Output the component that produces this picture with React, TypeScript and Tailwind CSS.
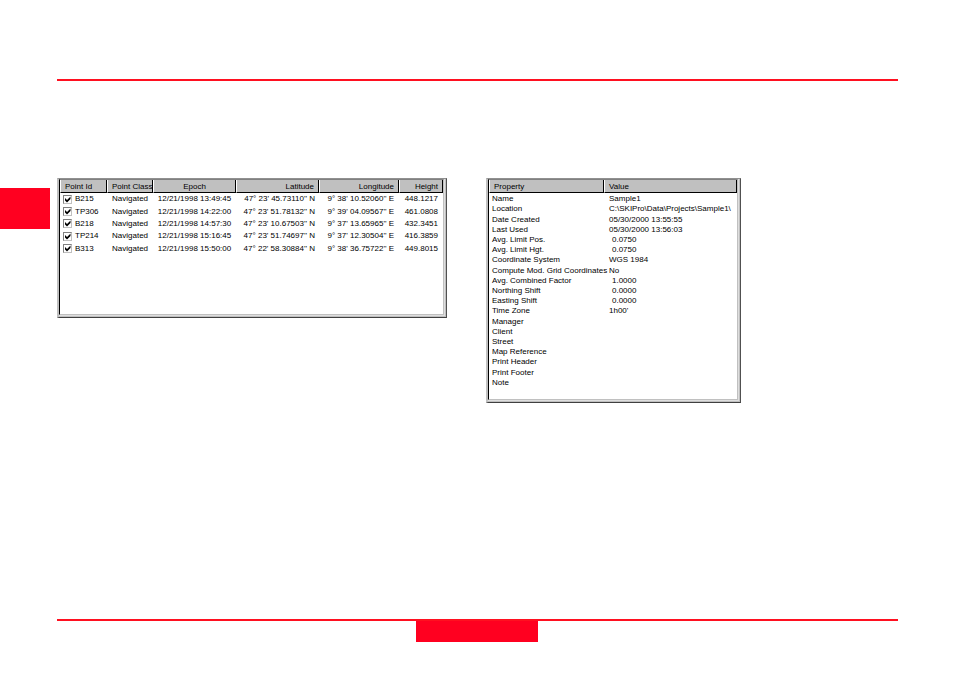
import type { ReactNode } from "react";
import clsx from "clsx";

type Point = {
  id: string;
  pointClass: string;
  epoch: string;
  latitude: string;
  longitude: string;
  height: string;
};

const points: Point[] = [
  { id: "B215", pointClass: "Navigated", epoch: "12/21/1998 13:49:45", latitude: "47° 23' 45.73110'' N", longitude: "9° 38' 10.52060'' E", height: "448.1217" },
  { id: "TP306", pointClass: "Navigated", epoch: "12/21/1998 14:22:00", latitude: "47° 23' 51.78132'' N", longitude: "9° 39' 04.09567'' E", height: "461.0808" },
  { id: "B218", pointClass: "Navigated", epoch: "12/21/1998 14:57:30", latitude: "47° 23' 10.67503'' N", longitude: "9° 37' 13.65965'' E", height: "432.3451" },
  { id: "TP214", pointClass: "Navigated", epoch: "12/21/1998 15:16:45", latitude: "47° 23' 51.74697'' N", longitude: "9° 37' 12.30504'' E", height: "416.3859" },
  { id: "B313", pointClass: "Navigated", epoch: "12/21/1998 15:50:00", latitude: "47° 22' 58.30884'' N", longitude: "9° 38' 36.75722'' E", height: "449.8015" },
];

const properties: { name: string; value: string; numeric?: boolean }[] = [
  { name: "Name", value: "Sample1" },
  { name: "Location", value: "C:\\SKIPro\\Data\\Projects\\Sample1\\" },
  { name: "Date Created", value: "05/30/2000 13:55:55" },
  { name: "Last Used", value: "05/30/2000 13:56:03" },
  { name: "Avg. Limit Pos.", value: "0.0750", numeric: true },
  { name: "Avg. Limit Hgt.", value: "0.0750", numeric: true },
  { name: "Coordinate System", value: "WGS 1984" },
  { name: "Compute Mod. Grid Coordinates", value: "No" },
  { name: "Avg. Combined Factor", value: "1.0000", numeric: true },
  { name: "Northing Shift", value: "0.0000", numeric: true },
  { name: "Easting Shift", value: "0.0000", numeric: true },
  { name: "Time Zone", value: "1h00'" },
  { name: "Manager", value: "" },
  { name: "Client", value: "" },
  { name: "Street", value: "" },
  { name: "Map Reference", value: "" },
  { name: "Print Header", value: "" },
  { name: "Print Footer", value: "" },
  { name: "Note", value: "" },
];

// sunken window edge: three nested bevels
function ListFrame({ children, className }: { children: ReactNode; className?: string }) {
  return (
    <section
      className={clsx(
        "border-t border-r border-b border-l-2 border-t-[#909090] border-r-[#505050] border-b-[#404040] border-l-[#c0c0c0]",
        className
      )}
    >
      <div className="h-full border-r border-b border-[#c0c0c0] bg-[#dedede] pr-px pb-px">
        <div className="h-full border border-t-[#808080] border-r-[#c0c0c0] border-b-[#c0c0c0] border-l-black bg-white">
          {children}
        </div>
      </div>
    </section>
  );
}

function HeadCell({ children, className }: { children?: ReactNode; className?: string }) {
  return (
    <th
      scope="col"
      className={clsx(
        "h-[13px] border-r border-b border-l border-r-black border-b-black border-l-white bg-[#c0c0c0] px-1 pt-0.5 pb-0 font-normal leading-[10px]",
        className
      )}
    >
      {children}
    </th>
  );
}

function PointList() {
  return (
    <ListFrame className="h-[140px] w-[390px]">
      <table className="h-[75px] w-full table-fixed border-separate border-spacing-0">
        <colgroup>
          <col className="w-[47px]" />
          <col className="w-[46px]" />
          <col className="w-[83px]" />
          <col className="w-[83px]" />
          <col className="w-[80px]" />
          <col />
        </colgroup>
        <thead>
          <tr>
            <HeadCell className="text-left">Point Id</HeadCell>
            <HeadCell className="text-left">Point Class</HeadCell>
            <HeadCell className="text-center">Epoch</HeadCell>
            <HeadCell className="text-right">Latitude</HeadCell>
            <HeadCell className="text-right">Longitude</HeadCell>
            <HeadCell className="text-right">Height</HeadCell>
          </tr>
        </thead>
        <tbody>
          {points.map((p) => (
            <tr key={p.id}>
              <td className="p-0 pl-[3px]">
                <label className="flex items-center gap-[3px]">
                  <span className="relative flex size-[9px]">
                    <input
                      type="checkbox"
                      defaultChecked
                      className="peer size-[9px] appearance-none border border-[#c0c0c0] border-t-[#808080] border-l-[#808080] bg-white"
                    />
                    <svg
                      viewBox="0 0 9 9"
                      className="pointer-events-none absolute inset-0 hidden size-[9px] peer-checked:block"
                      aria-hidden
                    >
                      <path d="M2 3v2.5L4 7.5l3.5-3.5V1.5L4 5z" fill="#000" />
                    </svg>
                  </span>
                  {p.id}
                </label>
              </td>
              <td className="p-0 pl-[5px]">{p.pointClass}</td>
              <td className="p-0 text-center">{p.epoch}</td>
              <td className="p-0 pr-1 text-right">{p.latitude}</td>
              <td className="p-0 pr-[5px] text-right">{p.longitude}</td>
              <td className="p-0 pr-[5px] text-right">{p.height}</td>
            </tr>
          ))}
        </tbody>
      </table>
    </ListFrame>
  );
}

function PropertyList() {
  return (
    <ListFrame className="h-[225px] w-[255px]">
      <table className="h-[207px] w-full table-fixed border-separate border-spacing-0">
        <colgroup>
          <col className="w-[115px]" />
          <col />
        </colgroup>
        <thead>
          <tr>
            <HeadCell className="text-left">Property</HeadCell>
            <HeadCell className="text-left">Value</HeadCell>
          </tr>
        </thead>
        <tbody>
          {properties.map((row) => (
            <tr key={row.name}>
              <td className="pt-0.5 pr-0 pb-0 pl-[3px] leading-[8px]">{row.name}</td>
              <td className={clsx("pt-0.5 pr-0 pb-0 leading-[8px]", row.numeric ? "pl-2" : "pl-[5px]")}>
                {row.value}
              </td>
            </tr>
          ))}
        </tbody>
      </table>
    </ListFrame>
  );
}

export default function App() {
  return (
    <div className="flex min-h-screen flex-col bg-white font-['Liberation_Sans',Arial,sans-serif] text-[8px] leading-3 whitespace-nowrap text-black">
      <header className="mt-[79px] mr-14 ml-[57px] h-0.5 bg-[#ff1020]" />
      <main className="mt-[97px] flex flex-1 items-start">
        <aside className="mt-2.5 mr-[7px] h-[41px] w-[50px] shrink-0 bg-[#ff0020]" />
        <div className="flex items-start gap-[39px]">
          <PointList />
          <PropertyList />
        </div>
      </main>
      <footer className="mr-14 mb-[31px] ml-[57px] border-t-2 border-[#ff1020] pr-px">
        <div className="mx-auto h-[21px] w-[122px] bg-[#ff0020]" />
      </footer>
    </div>
  );
}
